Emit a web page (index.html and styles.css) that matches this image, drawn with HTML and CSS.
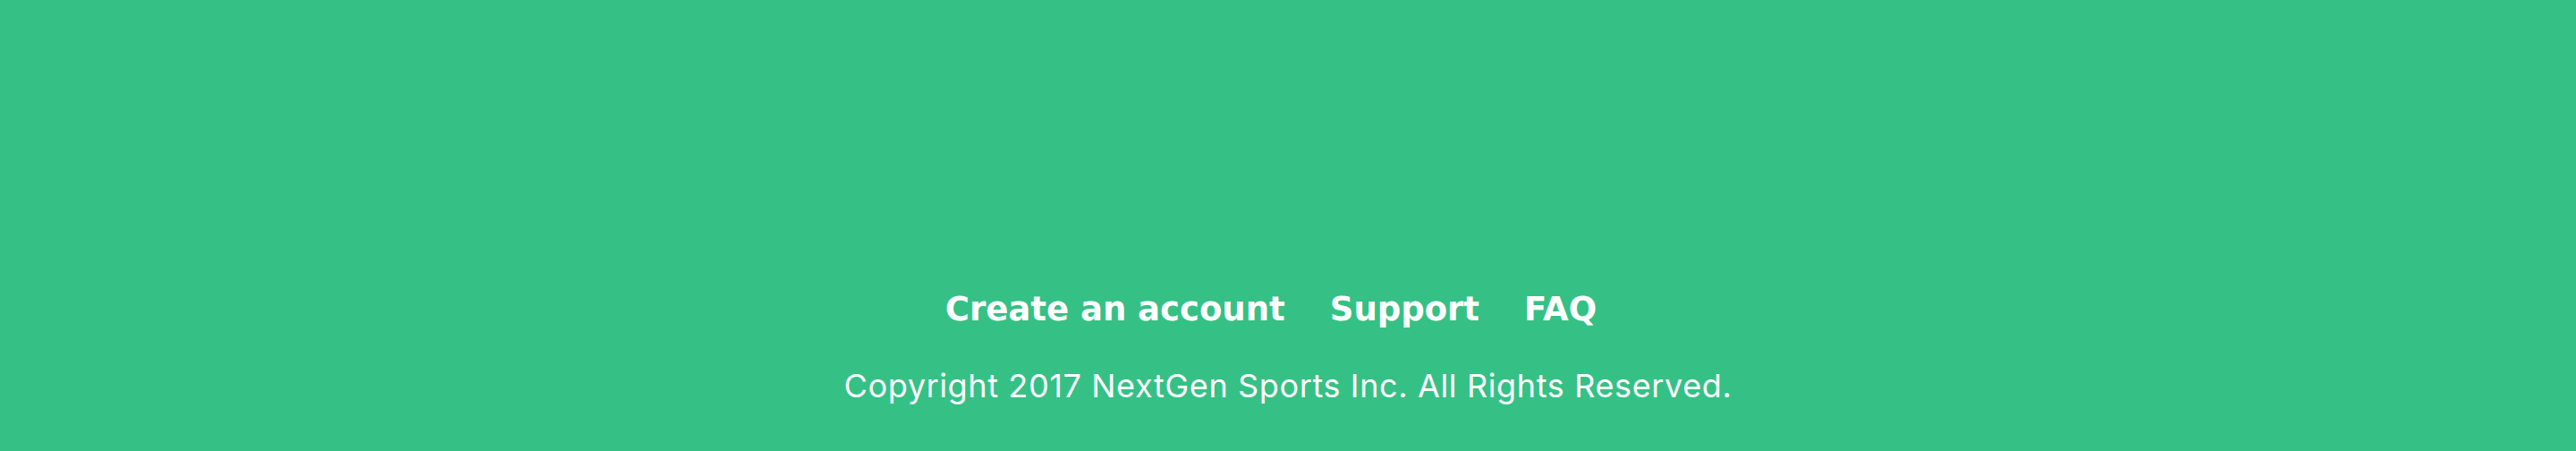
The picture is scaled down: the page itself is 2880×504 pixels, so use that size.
FILE: index.html
```html
<!DOCTYPE html>
<html lang="en">
<head>
<meta charset="utf-8">
<title>NextGen Sports</title>
<link rel="stylesheet" href="styles.css">
</head>
<body>
<footer class="footer">
  <ul class="footer-links">
    <li><a href="#">Create an account</a></li>
    <li><a href="#">Support</a></li>
    <li><a href="#">FAQ</a></li>
  </ul>
  <p class="copyright">Copyright 2017 NextGen Sports Inc. All Rights Reserved.</p>
</footer>
</body>
</html>
```

FILE: styles.css
```css
html, body {
  margin: 0;
  padding: 0;
}
body {
  background: #35c185;
  color: #ffffff;
}
.footer {
  height: 504px;
  box-sizing: border-box;
  padding-top: 321px;
  display: flex;
  flex-direction: column;
  align-items: center;
}
.footer-links {
  list-style: none;
  margin: 0;
  padding: 0;
  display: flex;
  gap: 50px;
  font-family: "DejaVu Sans", sans-serif;
  font-weight: bold;
  font-size: 37px;
  line-height: 50px;
  transform: translateX(-19px);
}
.footer-links a {
  color: #ffffff;
  text-decoration: none;
}
.copyright {
  margin: 38px 0 0;
  font-family: Inter, "Liberation Sans", sans-serif;
  font-size: 36px;
  letter-spacing: 0.63px;
  line-height: 44px;
}
```
